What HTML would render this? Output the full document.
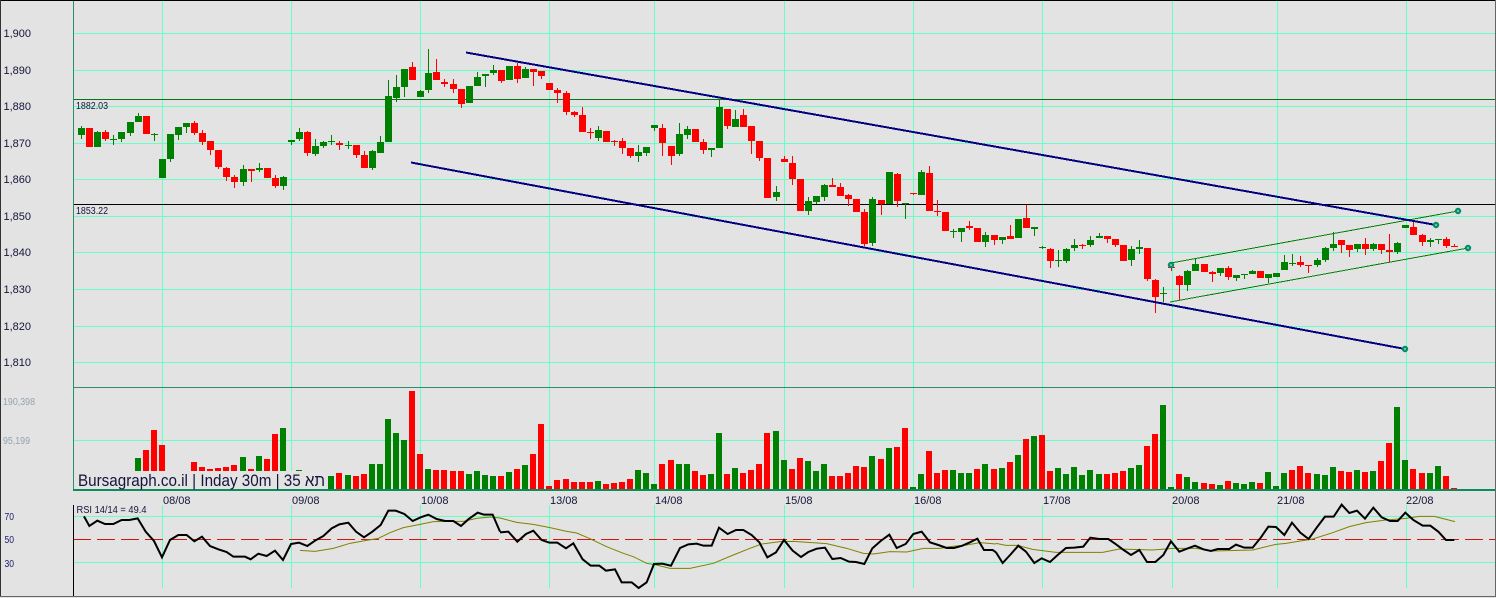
<!DOCTYPE html>
<html><head><meta charset="utf-8"><style>
html,body{margin:0;padding:0;background:#e3e3e3}
svg{display:block}
text{font-family:"Liberation Sans","Noto Sans CJK JP",sans-serif;fill:#14143c}
</style></head><body>
<svg width="1496" height="598" viewBox="0 0 1496 598" xmlns="http://www.w3.org/2000/svg">
<rect width="1496" height="598" fill="#e3e3e3"/>
<g shape-rendering="crispEdges" fill="none">
<path stroke="#66ffc6" stroke-width="1" d="M73 33.5H1495M73 70.5H1495M73 106.5H1495M73 143.5H1495M73 179.5H1495M73 216.5H1495M73 252.5H1495M73 289.5H1495M73 326.5H1495M73 362.5H1495M73 440.5H1495M73 516.5H1495M73 562.5H1495
M162.5 1V489M291.5 1V489M420.5 1V489M549.5 1V489M654.5 1V489M784.5 1V489M913.5 1V489M1042.5 1V489M1172.5 1V489M1277.5 1V489M1406.5 1V489
M162.5 505V588M291.5 505V588M420.5 505V588M549.5 505V588M654.5 505V588M784.5 505V588M913.5 505V588M1042.5 505V588M1172.5 505V588M1277.5 505V588M1406.5 505V588"/>
<path stroke="#007a10" stroke-width="1" d="M74 99.5H1495"/>
<path stroke="#000" stroke-width="1" d="M74 204.5H1495"/>
<!-- volume green -->
<path stroke="#008000" stroke-width="6" d="M138 458V489M243 457V489M259 456V489M283 428V489M299 470V489M331 476V489M348 475V489M372 464V489M380 464V489M388 419V489M396 433V489M404 440V489M428 469V489M469 474V489M477 471V489M485 475V489M493 476V489M509 472V489M525 465V489M598 481V489M638 470V489M646 473V489M654 484V489M679 464V489M687 464V489M711 474V489M719 433V489M735 468V489M776 431V489M784 460V489M808 461V489M816 471V489M824 464V489M872 456V489M889 448V489M913 487V489M921 474V489M953 470V489M961 473V489M969 473V489M985 464V489M1002 468V489M1018 455V489M1034 436V489M1058 468V489M1066 474V489M1074 467V489M1082 475V489M1090 470V489M1099 474V489M1131 468V489M1139 465V489M1163 405V489M1171 487V489M1187 477V489M1195 482V489M1220 485V489M1236 483V489M1244 484V489M1252 482V489M1268 472V489M1276 486V489M1284 473V489M1317 474V489M1325 475V489M1333 467V489M1357 470V489M1373 471V489M1397 407V489M1405 460V489M1430 473V489M1438 466V489"/>
<!-- volume red -->
<path stroke="#ff0000" stroke-width="6" d="M146 450V489M154 430V489M162 445V489M194 462V489M202 467V489M210 469V489M218 468V489M226 467V489M234 465V489M251 469V489M267 459V489M275 434V489M339 473V489M356 476V489M364 474V489M412 391V489M420 454V489M436 470V489M444 470V489M453 471V489M461 471V489M501 476V489M517 469V489M533 454V489M541 424V489M549 486V489M557 480V489M566 479V489M574 482V489M582 482V489M590 482V489M606 484V489M614 483V489M622 482V489M630 479V489M662 464V489M671 460V489M695 471V489M703 475V489M727 474V489M743 473V489M751 470V489M759 464V489M767 433V489M792 469V489M800 458V489M832 476V489M840 476V489M848 473V489M856 466V489M864 467V489M881 459V489M897 447V489M905 428V489M929 451V489M937 473V489M945 470V489M977 469V489M994 469V489M1010 462V489M1026 439V489M1042 435V489M1050 471V489M1107 474V489M1115 473V489M1123 471V489M1147 446V489M1155 434V489M1179 474V489M1204 483V489M1212 484V489M1228 481V489M1260 483V489M1292 470V489M1300 466V489M1308 473V489M1341 471V489M1349 472V489M1365 472V489M1381 461V489M1389 443V489M1413 469V489M1422 473V489M1446 476V489M1454 488V489"/>
<rect x="75" y="471" width="253" height="18" fill="#e3e3e3" stroke="none"/>
<path stroke="#2b8f6b" stroke-width="1" d="M73.5 0V490M73 387.5H1495"/>
<path stroke="#0a8c5c" stroke-width="2" d="M73 490H1495"/>
<!-- candle wicks green -->
<path stroke="#008000" stroke-width="1" d="M81.5 126V139M97.5 131V147M113.5 135V145M121.5 132V142M130.5 122V136M138.5 113V122M154.5 133V141M170.5 134V162M178.5 127V140M186.5 123V133M243.5 165V186M259.5 163V172M283.5 176V190M291.5 140V145M299.5 128V141M315.5 139V156M323.5 141V148M331.5 135V145M348.5 141V149M372.5 150V170M380.5 136V153M388.5 80V142M396.5 75V102M404.5 69V97M420.5 90V97M428.5 49V93M477.5 72V86M485.5 74V87M493.5 65V75M525.5 67V78M598.5 126V141M638.5 145V162M646.5 147V156M654.5 125V131M679.5 123V156M687.5 126V139M711.5 148V157M719.5 99V148M735.5 110V127M776.5 186V201M808.5 197V215M816.5 196V204M824.5 184V201M872.5 197V246M905.5 203V219M921.5 170V195M953.5 229V238M961.5 228V242M985.5 232V247M1002.5 237V244M1034.5 227V236M1042.5 246V249M1058.5 250V267M1066.5 248V263M1074.5 239V251M1090.5 236V247M1099.5 233V238M1131.5 246V266M1139.5 240V254M1163.5 287V302M1187.5 270V291M1195.5 259V271M1220.5 268V276M1236.5 275V281M1244.5 274V279M1252.5 270V274M1268.5 274V283M1284.5 255V270M1292.5 254V266M1317.5 258V267M1325.5 247V262M1333.5 232V251M1357.5 244V252M1373.5 243V251M1397.5 242V254M1430.5 238V247M1438.5 239V244"/>
<!-- candle bodies green -->
<path stroke="#008000" stroke-width="7" d="M81.5 128V135M97.5 132V147M113.5 139V140M121.5 132V139M130.5 122V133M138.5 116V122M154.5 134V135M162.5 159V178M170.5 134V159M178.5 127V135M186.5 123V127M243.5 169V182M259.5 168V170M283.5 177V186M291.5 140V142M299.5 132V139M315.5 146V154M323.5 142V146M331.5 141V142M348.5 145V146M372.5 151V168M380.5 142V153M388.5 96V142M396.5 87V98M404.5 69V87M420.5 91V97M428.5 73V90M469.5 86V103M477.5 77V86M485.5 74V76M493.5 70V73M509.5 66V80M525.5 69V78M598.5 130V138M638.5 152V156M646.5 147V153M654.5 125V128M679.5 134V154M687.5 129V135M711.5 148V150M719.5 107V148M735.5 119V127M776.5 192V197M808.5 201V211M816.5 196V202M824.5 185V197M872.5 199V243M889.5 172V204M905.5 203V204M921.5 172V195M953.5 231V232M961.5 228V232M985.5 235V242M1002.5 237V240M1018.5 219V238M1034.5 227V229M1042.5 247V248M1058.5 260V261M1066.5 249V261M1074.5 245V248M1090.5 240V245M1099.5 236V238M1131.5 249V260M1139.5 247V249M1163.5 293V294M1187.5 271V285M1195.5 264V271M1220.5 268V273M1236.5 275V278M1244.5 274V275M1252.5 271V274M1268.5 274V278M1276.5 273V277M1284.5 262V270M1292.5 263V264M1317.5 260V265M1325.5 248V260M1333.5 244V248M1357.5 244V249M1373.5 244V249M1397.5 243V252M1405.5 225V228M1430.5 240V242M1438.5 239V240"/>
<!-- candle wicks red -->
<path stroke="#ff0000" stroke-width="1" d="M105.5 130V141M194.5 121V135M202.5 130V145M210.5 141V155M218.5 150V169M226.5 167V181M234.5 175V188M251.5 169V182M275.5 175V188M307.5 131V156M339.5 141V150M356.5 145V158M364.5 151V168M412.5 62V80M436.5 59V80M444.5 79V87M453.5 79V93M461.5 89V108M501.5 70V83M517.5 63V83M533.5 69V86M541.5 71V79M557.5 88V103M566.5 91V115M574.5 111V117M582.5 107V132M590.5 128V139M614.5 140V146M622.5 138V154M630.5 148V158M662.5 124V156M671.5 146V165M703.5 139V154M727.5 109V129M743.5 109V127M751.5 126V154M759.5 141V161M784.5 156V162M792.5 156V185M832.5 178V187M840.5 183V196M848.5 194V206M864.5 209V246M881.5 200V215M897.5 173V207M913.5 193V195M929.5 166V211M937.5 200V216M969.5 221V230M994.5 235V245M1010.5 225V239M1026.5 205V228M1050.5 248V268M1082.5 244V249M1107.5 236V243M1115.5 239V247M1147.5 248V281M1155.5 279V313M1171.5 267V271M1179.5 275V300M1212.5 271V282M1228.5 266V280M1300.5 256V267M1308.5 265V273M1341.5 240V253M1349.5 245V257M1365.5 238V255M1381.5 244V254M1389.5 234V262M1413.5 222V235M1422.5 234V246M1446.5 237V248M1454.5 244V247"/>
<!-- candle bodies red -->
<path stroke="#ff0000" stroke-width="7" d="M89.5 128V147M105.5 132V139M146.5 116V134M194.5 123V133M202.5 133V142M210.5 141V150M218.5 150V167M226.5 168V177M234.5 177V182M251.5 169V171M267.5 168V178M275.5 178V186M307.5 132V153M339.5 143V145M356.5 145V155M364.5 155V168M412.5 67V80M436.5 72V80M444.5 82V84M453.5 84V89M461.5 89V104M501.5 70V81M517.5 66V79M533.5 69V72M541.5 71V76M549.5 83V90M557.5 90V93M566.5 93V112M574.5 112V115M582.5 115V132M590.5 132V133M606.5 131V142M614.5 141V142M622.5 141V148M630.5 148V156M662.5 128V143M671.5 146V156M695.5 129V142M703.5 142V150M727.5 109V126M743.5 115V127M751.5 126V141M759.5 141V158M767.5 158V198M784.5 159V162M792.5 163V179M800.5 179V211M832.5 185V187M840.5 187V196M848.5 195V199M856.5 199V212M864.5 212V244M881.5 200V204M897.5 174V201M913.5 193V194M929.5 173V211M937.5 211V212M945.5 212V231M969.5 226V228M977.5 228V242M994.5 235V240M1010.5 236V239M1026.5 218V228M1050.5 249V261M1082.5 245V246M1107.5 236V239M1115.5 239V245M1123.5 245V261M1147.5 248V279M1155.5 280V297M1171.5 267V268M1179.5 276V285M1204.5 264V272M1212.5 272V274M1228.5 268V277M1260.5 271V278M1300.5 262V265M1308.5 265V266M1341.5 240V245M1349.5 245V250M1365.5 244V249M1381.5 244V250M1389.5 250V252M1413.5 227V235M1422.5 235V242M1446.5 239V246M1454.5 246V247"/>
<!-- channels -->
<path stroke="#008000" stroke-width="1" d="M1171 263L1458 211M1170 302L1468 248"/>
<path stroke="#000080" stroke-width="2" d="M466 52.5L1436 225M411 162.5L1405 349"/>
<!-- rsi 50 -->
<path stroke="#d41414" stroke-width="1" stroke-dasharray="18 6" d="M73 539.5H1495"/>
<path stroke="#000" stroke-width="1" d="M73.5 505V596"/>
</g>
<!-- markers -->
<g fill="#6fbfa6" stroke="#008c68" stroke-width="2">
<circle cx="1171" cy="265" r="2.2"/><circle cx="1436" cy="225" r="2.2"/><circle cx="1405" cy="349" r="2.2"/><circle cx="1458" cy="211" r="2.2"/><circle cx="1468" cy="248" r="2.2"/>
</g>
<!-- RSI -->
<g transform="translate(0 380) scale(.33333)" fill="none" stroke-linejoin="miter">
<g stroke="#808000" stroke-width="3">
<path d="M900 511L945 514L1000 505L1050 490L1100 481L1135 475L1170 458L1210 443L1260 433L1300 425L1350 424L1390 424L1430 415L1470 411L1500 414"/>
<path transform="translate(1500 0)" d="M0 414L50 427L100 433L150 443L200 454L230 459L270 476L320 500L370 520L400 530L440 550L470 555L510 565L570 565L640 550L700 525L750 505L785 492L840 485L880 484L980 491L1040 505L1090 520L1120 522L1170 515L1220 516L1270 505L1320 505L1350 500L1400 495L1440 488L1488 492"/>
<path transform="translate(2988 0)" d="M0 490L30 496L65 496L110 508L180 517L320 517L370 507L470 510L530 505L600 505L650 513L770 510L840 493L870 490L950 477L1010 458L1060 440L1110 428L1170 420L1230 415L1270 409L1315 409L1377 425"/>
</g>
<g stroke="#000" stroke-width="6">
<path d="M252 409L268 438L292 422L315 432L340 432L365 420L388 420L413 415L437 455L462 483L486 532L510 480L535 465L560 465L583 484L606 470L630 498L655 508L680 516L700 530L735 530L752 538L775 521L800 528L825 512L849 540L873 492L897 488L922 498L945 482L970 468L995 445L1018 433L1045 428L1068 455L1092 472L1117 455L1142 435L1165 392L1187 392L1213 402L1238 423L1262 412L1285 404L1310 417L1335 423L1360 423L1383 438L1405 418L1433 398L1452 404L1478 404L1500 455"/>
<path transform="translate(1500 0)" d="M0 457L25 455L52 485L78 462L100 452L125 480L148 488L172 488L198 505L220 490L248 538L272 557L298 557L318 572L345 568L365 607L395 607L416 624L440 607L462 552L487 551L513 557L540 504L565 493L590 491L610 497L635 497L657 443L683 462L708 450L730 450L755 465L778 487L802 532L828 517L852 480L878 512L903 531L925 516L950 506L975 503L997 537L1022 534L1047 545L1068 546L1093 552L1117 505L1142 483L1168 464L1190 504L1217 492L1240 462L1265 455L1290 487L1315 495L1340 504L1362 504L1387 497L1410 487L1432 476L1452 510L1478 510L1488 517"/>
<path transform="translate(2988 0)" d="M0 517L20 549L45 522L67 497L90 515L115 549L137 535L162 546L185 525L210 504L235 503L262 500L283 473L310 477L337 477L360 493L383 510L405 525L430 510L453 546L478 546L502 525L525 484L550 515L573 506L597 497L622 508L645 513L665 507L700 507L720 494L745 503L770 503L795 472L817 440L840 441L865 465L888 428L913 458L938 477L962 443L987 410L1013 410L1037 374L1060 399L1083 392L1107 416L1132 383L1157 412L1182 423L1205 423L1228 398L1252 420L1280 437L1303 437L1327 455L1350 480L1375 480"/>
</g>
</g>
<!-- text -->
<g font-size="11">
<text x="3.5" y="37">1,900</text><text x="3.5" y="74">1,890</text><text x="3.5" y="110">1,880</text><text x="3.5" y="147">1,870</text><text x="3.5" y="183">1,860</text><text x="3.5" y="220">1,850</text><text x="3.5" y="256">1,840</text><text x="3.5" y="293">1,830</text><text x="3.5" y="330">1,820</text><text x="3.5" y="366">1,810</text>
<text x="163" y="504">08/08</text><text x="292" y="504">09/08</text><text x="421" y="504">10/08</text><text x="550" y="504">13/08</text><text x="655" y="504">14/08</text><text x="785" y="504">15/08</text><text x="914" y="504">16/08</text><text x="1043" y="504">17/08</text><text x="1172" y="504">20/08</text><text x="1277" y="504">21/08</text><text x="1406" y="504">22/08</text>
</g>
<g font-size="10">
<text x="76" y="109" textLength="32" lengthAdjust="spacingAndGlyphs">1882.03</text>
<text x="76" y="214" textLength="32" lengthAdjust="spacingAndGlyphs">1853.22</text>
<text x="76.5" y="513" textLength="70" lengthAdjust="spacingAndGlyphs">RSI 14/14 = 49.4</text>
<text x="3" y="405" textLength="32" lengthAdjust="spacingAndGlyphs" style="fill:#93a3b2">190,398</text>
<text x="3" y="444" textLength="27" lengthAdjust="spacingAndGlyphs" style="fill:#93a3b2">95,199</text>
<text x="4.5" y="520" textLength="9.5" lengthAdjust="spacingAndGlyphs" style="fill:#1c1c6c">70</text>
<text x="4.5" y="543" textLength="9.5" lengthAdjust="spacingAndGlyphs" style="fill:#1c1c6c">50</text>
<text x="4.5" y="567" textLength="9.5" lengthAdjust="spacingAndGlyphs" style="fill:#1c1c6c">30</text>
</g>
<text x="78" y="486" font-size="16.5" textLength="247" lengthAdjust="spacingAndGlyphs">Bursagraph.co.il | Inday 30m | 35 תא</text>
<!-- borders -->
<g shape-rendering="crispEdges" fill="none">
<path stroke="#000" stroke-width="1" d="M0 0.5H1496"/>
<path stroke="#333" stroke-width="1" d="M0.5 0V597"/>
<path stroke="#666" stroke-width="1" d="M0 596.5H1496M1495.5 0V597"/>
</g>
</svg>
</body></html>
